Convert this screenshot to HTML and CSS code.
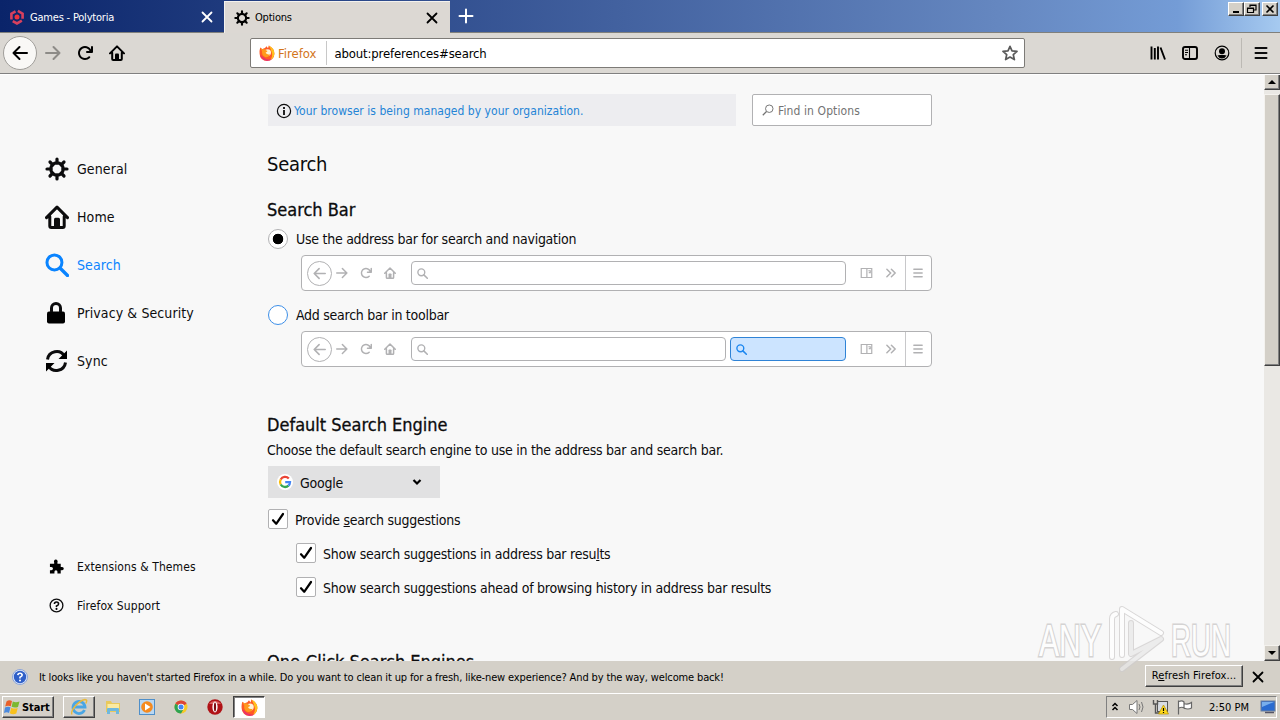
FILE: index.html
```html
<!DOCTYPE html>
<html lang="en">
<head>
    <meta charset="UTF-8">
    <title>Options</title>
    <link rel="stylesheet" href="styles.css">
</head>
<body>
    <svg class="defs">
        <symbol id="gear" viewBox="0 0 24 24">
            <circle cx="12" cy="12" r="6.2" fill="none" stroke="currentColor" stroke-width="3.2"/>
            <path d="M12 2v4M12 18v4M2 12h4M18 12h4M5 5l2.800 2.800M16.200 16.200l2.800 2.800M5 19l2.800-2.800M16.200 7.800l2.800-2.800" fill="none" stroke="currentColor" stroke-width="3.2" stroke-linecap="round"/>
        </symbol>
        <symbol id="home" viewBox="0 0 16 16">
            <path d="M1 8.400L8 1.400l7 7M3.200 7.700V14q0 1 1 1h7.600q1 0 1-1V7.700" fill="none" stroke="currentColor" stroke-width="2" stroke-linecap="round" stroke-linejoin="round"/>
            <path d="M6 14.500V9.500q0-1 1-1h2q1 0 1 1v5z" fill="currentColor"/>
        </symbol>
        <symbol id="search" viewBox="0 0 16 16">
            <path d="M10 10l5 5" fill="none" stroke="currentColor" stroke-width="2.200" stroke-linecap="round"/>
            <circle cx="6.300" cy="6.300" r="5" fill="none" stroke="currentColor" stroke-width="2"/>
        </symbol>
        <symbol id="back" viewBox="0 0 16 16">
            <path d="M15 8H1.500M7.500 2L1.500 8l6 6" fill="none" stroke="currentColor" stroke-width="2" stroke-linecap="round" stroke-linejoin="round"/>
        </symbol>
        <symbol id="forward" viewBox="0 0 16 16">
            <path d="M1 8h13.500M8.500 2l6 6-6 6" fill="none" stroke="currentColor" stroke-width="2" stroke-linecap="round" stroke-linejoin="round"/>
        </symbol>
        <symbol id="reload" viewBox="0 0 16 16">
            <path d="M15 1a1 1 0 0 0-1 1v2.418A6.995 6.995 0 1 0 8 15a6.954 6.954 0 0 0 4.950-2.050 1 1 0 0 0-1.414-1.414A5.019 5.019 0 1 1 12.549 6H10a1 1 0 0 0 0 2h5a1 1 0 0 0 1-1V2a1 1 0 0 0-1-1z" fill="currentColor"/>
        </symbol>
        <symbol id="close" viewBox="0 0 12 12">
            <path d="M1.500 1.500l9 9M10.500 1.500l-9 9" fill="none" stroke="currentColor" stroke-width="1.800" stroke-linecap="round"/>
        </symbol>
        <symbol id="menu" viewBox="0 0 16 16">
            <path d="M2.500 3h11M2.500 8h11M2.500 13h11" fill="none" stroke="currentColor" stroke-width="2" stroke-linecap="round"/>
        </symbol>
        <symbol id="panel" viewBox="0 0 16 16">
            <path d="M1 2h14v12H1zM8.500 2v12M10.500 5h2.500v2.500h-2" fill="none" stroke="currentColor" stroke-width="1.600"/>
        </symbol>
        <symbol id="more" viewBox="0 0 16 16">
            <path d="M2.500 3l5 5-5 5M8.500 3l5 5-5 5" fill="none" stroke="currentColor" stroke-width="2" stroke-linecap="round"/>
        </symbol>
        <symbol id="check" viewBox="0 0 18 18">
            <path d="M4 10.200l3.200 3.600L14 4" fill="none" stroke="currentColor" stroke-width="2.200" stroke-linecap="round" stroke-linejoin="round"/>
        </symbol>
        <symbol id="firefox" viewBox="0 0 16 16">
            <path d="M1.200 2.500L3.300 4.200Q4.500 3.300 6 3L7.500 1.200 9 3.200 9.800.5Q15.600 3.500 15.400 8.800A7.400 7.200 0 0 1 .6 8.800Q.3 5.500 1.200 2.500z" fill="#ff5a26"/>
            <path d="M9.800.5Q15.600 3.500 15.400 8.800q-.3 4-4 6.200Q14 11 12.800 7.500 12 4 9.800.5z" fill="#ffc21c"/>
            <path d="M1 9q1 6 7 7 3.500 0 5-2-5 1.500-8.500-1.500T1 9z" fill="#e0218a" opacity=".7"/>
            <circle cx="8.600" cy="7.600" r="3.400" class="globe"/>
            <path d="M1.200 2.500L3.300 4.200Q5.500 3.500 7 5.200L8.500 6Q8 7.400 6.600 7.600q.6 2.400 4.400 1.600-1 3.300-4.500 3Q2.500 11 3 6z" fill="#ff9a1c"/>
        </symbol>
    </svg>

    <div class="titlebar">
        <div class="tab">
            <svg class="tab-icon" viewBox="0 0 16 16"><path d="M8 1.500l5.600 3.200v6.600L8 14.500l-5.600-3.200V4.700z" fill="none" stroke="#d8405e" stroke-width="2.600" stroke-dasharray="10.500 2.400" stroke-dashoffset="-1"/><circle cx="8" cy="8" r="2.500" fill="#f0323c"/></svg>
            <span class="tab-title">Games - Polytoria</span>
            <svg class="tab-close"><use href="#close"/></svg>
        </div>
        <div class="tab active">
            <svg class="tab-icon"><use href="#gear"/></svg>
            <span class="tab-title">Options</span>
            <svg class="tab-close"><use href="#close"/></svg>
        </div>
        <svg class="new-tab" viewBox="0 0 16 16"><path d="M8 1.500v13M1.500 8h13" stroke="#fff" stroke-width="2" stroke-linecap="round"/></svg>
        <div class="window-buttons">
            <div class="win-btn"><svg viewBox="0 0 12 10"><path d="M3 8h6" stroke="#000" stroke-width="2"/></svg></div>
            <div class="win-btn"><svg viewBox="0 0 12 10"><path d="M4 3V1h6v5H8M4 1.500h6M1.500 4h6v4.500h-6zM1.500 4.500h6" fill="none" stroke="#000" stroke-width="1.200"/></svg></div>
            <div class="win-btn last"><svg viewBox="0 0 12 10"><path d="M2.500 1.500l7 7M9.500 1.500l-7 7" stroke="#000" stroke-width="1.600"/></svg></div>
        </div>
    </div>

    <div class="navbar">
        <div class="nav-left">
            <span class="back-btn"><svg><use href="#back"/></svg></span>
            <svg class="dim"><use href="#forward"/></svg>
            <svg><use href="#reload"/></svg>
            <svg><use href="#home"/></svg>
        </div>
        <div class="urlbar">
            <svg class="ff"><use href="#firefox"/></svg>
            <span class="identity">Firefox</span>
            <span class="url">about:preferences#search</span>
            <svg class="star" viewBox="0 0 16 16"><path d="M8 1.300l2 4.600 5 .5-3.700 3.300 1.100 4.900L8 12l-4.400 2.600 1.100-4.900L1 6.400l5-.5z" fill="none" stroke="#5a5a5a" stroke-width="1.700" stroke-linejoin="round"/></svg>
        </div>
        <div class="nav-right">
            <svg viewBox="0 0 16 16"><path d="M1.500 1.500v13M4.800 3v11.500M8 1.500v13M10.500 2.500l4.500 12" fill="none" stroke="#000" stroke-width="1.900"/></svg>
            <svg viewBox="0 0 16 16"><rect x="1" y="2" width="14" height="12" rx="2" fill="none" stroke="#000" stroke-width="1.900"/><path d="M7.500 2v12M3 5.200h3M3 7.500h3M3 9.800h2" stroke="#000" stroke-width="1.100"/></svg>
            <svg viewBox="0 0 16 16"><circle cx="8" cy="8" r="6.800" fill="none" stroke="#000" stroke-width="1.200"/><circle cx="8" cy="6.300" r="3" /><path d="M3.400 10.500q2-.8 3-.5h3.200q1-.3 3 .5Q11 13.500 8 13.500t-4.600-3z"/></svg>
            <span class="nav-sep"></span>
            <svg><use href="#menu"/></svg>
        </div>
    </div>

    <div class="page">
        <div class="sidebar">
            <div class="category"><svg><use href="#gear"/></svg>General</div>
            <div class="category"><svg><use href="#home"/></svg>Home</div>
            <div class="category selected"><svg><use href="#search"/></svg>Search</div>
            <div class="category"><svg viewBox="0 0 24 24"><rect x="2" y="10.500" width="18" height="12" rx="2"/><path d="M6.500 11V7a4.500 4.500 0 0 1 9 0v4" fill="none" stroke="#0c0c0d" stroke-width="3"/></svg>Privacy &amp; Security</div>
            <div class="category"><svg viewBox="0 0 24 24"><path d="M2.500 10.500A9.200 9.200 0 0 1 19.500 7M20.500 13.500A9.200 9.200 0 0 1 3.500 17" fill="none" stroke="#0c0c0d" stroke-width="3"/><path d="M22 1.500V10H13.500zM1 22.500V14h8.500z"/></svg>Sync</div>
            <div class="side-links">
                <div class="side-link"><svg viewBox="0 0 16 16"><path d="M1 5h4.500V3.500a2 2 0 1 1 3.500 0V5h3.500v3.500H14a1.700 1.700 0 1 1 0 3.500h-1.500v3.500H9v-1.800a1.600 1.600 0 0 0-3.200 0v1.800H1V12h1.500a1.600 1.600 0 0 0 0-3.500H1z"/></svg>Extensions &amp; Themes</div>
                <div class="side-link"><svg viewBox="0 0 16 16"><circle cx="8" cy="8" r="6.800" fill="none" stroke="#0c0c0d" stroke-width="1.400"/><path d="M5.800 6.500Q5.800 4.300 8 4.300t2.200 2Q10.200 7.500 8 8.500v1" fill="none" stroke="#0c0c0d" stroke-width="1.700"/><circle cx="8" cy="11.600" r="1.100"/></svg>Firefox Support</div>
            </div>
        </div>

        <div class="main">
            <div class="top-row">
                <div class="managed">
                    <svg viewBox="0 0 16 16"><circle cx="8" cy="8" r="6.600" fill="none" stroke="#0c0c0d" stroke-width="1.200"/><path d="M8 7v5M8 4v1.900" stroke="#0c0c0d" stroke-width="1.800"/></svg>
                    Your browser is being managed by your organization.
                </div>
                <div class="find"><svg class="flip" viewBox="0 0 16 16"><path d="M10 10l5 5" stroke="#737373" stroke-width="1.600"/><circle cx="6.300" cy="6.300" r="5" fill="none" stroke="#737373" stroke-width="1.300"/></svg>Find in Options</div>
            </div>

            <h1>Search</h1>
            <h2>Search Bar</h2>
            <div class="option"><span class="radio checked"></span>Use the address bar for search and navigation</div>
            <div class="mock-bar">
                <span class="mock-back"><svg><use href="#back"/></svg></span>
                <svg><use href="#forward"/></svg>
                <svg><use href="#reload"/></svg>
                <svg><use href="#home"/></svg>
                <div class="mock-field"><svg><use href="#search"/></svg></div>
                <div class="mock-end"><svg><use href="#panel"/></svg><svg><use href="#more"/></svg></div>
                <div class="mock-menu"><svg><use href="#menu"/></svg></div>
            </div>
            <div class="option second"><span class="radio hover"></span>Add search bar in toolbar</div>
            <div class="mock-bar">
                <span class="mock-back"><svg><use href="#back"/></svg></span>
                <svg><use href="#forward"/></svg>
                <svg><use href="#reload"/></svg>
                <svg><use href="#home"/></svg>
                <div class="mock-field"><svg><use href="#search"/></svg></div>
                <div class="mock-field blue"><svg><use href="#search"/></svg></div>
                <div class="mock-end"><svg><use href="#panel"/></svg><svg><use href="#more"/></svg></div>
                <div class="mock-menu"><svg><use href="#menu"/></svg></div>
            </div>

            <h2 class="engine-title">Default Search Engine</h2>
            <p>Choose the default search engine to use in the address bar and search bar.</p>
            <div class="select">
                <svg class="google" viewBox="0 0 16 16">
                    <circle cx="8" cy="8" r="8" fill="#fff"/>
                    <g fill="none" stroke-width="2.300">
                        <path d="M11.800 4.500A5 5 0 0 0 3.700 5.500" stroke="#ea4335"/>
                        <path d="M3.700 5.500a5 5 0 0 0 0 5" stroke="#fbbc05"/>
                        <path d="M3.700 10.500a5 5 0 0 0 7.800 1.100" stroke="#34a853"/>
                        <path d="M11.500 11.600A5 5 0 0 0 13 8.200H8.200" stroke="#4285f4"/>
                    </g>
                </svg>
                <span>Google</span>
                <svg class="arrow" viewBox="0 0 10 8"><path d="M1.500 2L5 5.500 8.500 2" fill="none" stroke="#000" stroke-width="2.200"/></svg>
            </div>
            <div class="option check-row"><span class="checkbox"><svg><use href="#check"/></svg></span><span class="label">Provide <u>s</u>earch suggestions</span></div>
            <div class="option check-row indent"><span class="checkbox"><svg><use href="#check"/></svg></span><span class="label">Show search suggestions in address bar resu<u>l</u>ts</span></div>
            <div class="option check-row indent"><span class="checkbox"><svg><use href="#check"/></svg></span><span class="label">Show search suggestions ahead of browsing history in address bar results</span></div>
            <h2 class="one-click">One-Click Search Engines</h2>
        </div>

        <div class="scrollbar">
            <div class="scroll-btn"><svg viewBox="0 0 8 4"><path d="M0 4l4-4 4 4z"/></svg></div>
            <div class="thumb"></div>
            <div class="scroll-btn bottom"><svg viewBox="0 0 8 4"><path d="M0 0h8L4 4z"/></svg></div>
        </div>
    </div>

    <div class="notification">
        <svg class="help" viewBox="0 0 16 16"><circle cx="8" cy="8" r="7.500" fill="#dfe8fa" stroke="#8ba4d8"/><circle cx="8" cy="8" r="6.200" fill="#2f5fc8"/><path d="M5.800 6.200Q6 4.200 8 4.200t2.200 1.900Q10.200 7.300 8 8.300v1.200" fill="none" stroke="#fff" stroke-width="1.600"/><circle cx="8" cy="11.600" r="1" fill="#fff"/></svg>
        <span class="message">It looks like you haven't started Firefox in a while. Do you want to clean it up for a fresh, like-new experience? And by the way, welcome back!</span>
        <div class="refresh">R<u>e</u>fresh Firefox...</div>
        <svg class="dismiss"><use href="#close"/></svg>
    </div>

    <div class="taskbar">
        <div class="start">
            <svg viewBox="0 0 16 16"><path d="M2.500 2.500Q5 .5 8 2L6.800 7.300Q4 6 1.200 7.500z" fill="#e8602a"/><path d="M8.800 2.400Q11.500 4 15.500 2.500L14 8Q10.500 9.200 7.600 7.700z" fill="#7cb82f"/><path d="M1 8.500q3-1.500 5.500-.2L5 14Q3 12.500 0 14z" fill="#4b8ade"/><path d="M7.300 8.700q3 1.600 6.400.3L12.300 14.500q-3.300 1.500-6.500-.2z" fill="#f8c11c"/></svg>
            Start
        </div>
        <div class="task raised"><svg viewBox="0 0 18 18"><path d="M14.500 12A6 6 0 1 1 15 9H5" fill="none" stroke="#4aa6e4" stroke-width="2.800"/><path d="M2 16.500C0 13 8 3 15 1.500q3 0 .8 4" fill="none" stroke="#e9b93a" stroke-width="1.400"/></svg></div>
        <div class="task"><svg viewBox="0 0 18 18"><path d="M2 3h5l1 2h8v9H2z" fill="#e9c95c"/><path d="M3.500 6H15v7H3.500z" fill="#fbeaa0"/><path d="M3 16v-5q0-1 1-1h10q1 0 1 1v5h-3v-3H6v3z" fill="#6fb8dd"/></svg></div>
        <div class="task"><svg viewBox="0 0 18 18"><rect x="1.500" y="1.500" width="15" height="15" fill="#b9d7f2" stroke="#4f8fc9"/><circle cx="9" cy="9" r="5.800" fill="#f58a1f"/><path d="M7 5.500l5.500 3.500L7 12.500z" fill="#fff"/></svg></div>
        <div class="task"><svg viewBox="0 0 18 18"><circle cx="9" cy="9" r="6.500" fill="#f6c928"/><path d="M9 9L3.400 5.700a6.500 6.500 0 0 1 11.200 0z" fill="#dc4437"/><path d="M9 9L3.400 5.700A6.500 6.500 0 0 0 9 15.500l2-3.500z" fill="#2ea352"/><circle cx="9" cy="9" r="3.300" fill="#fff"/><circle cx="9" cy="9" r="2.500" fill="#4285f4"/></svg></div>
        <div class="task"><svg viewBox="0 0 18 18"><circle cx="9" cy="9" r="7.700" fill="#b01216"/><path d="M3 6a7 6 0 0 1 12 0z" fill="#d9605e"/><ellipse cx="9" cy="9" rx="2.600" ry="5.400" fill="#fff"/><ellipse cx="9" cy="9" rx="1.100" ry="4.600" fill="#7d0c10"/></svg></div>
        <div class="task pressed"><svg><use href="#firefox"/></svg></div>
        <div class="tray">
            <svg class="expand" viewBox="0 0 8 12"><path d="M1.500 5L4 2.500 6.500 5M1.500 9L4 6.500 6.500 9" fill="none" stroke="#000" stroke-width="1.500"/></svg>
            <svg class="speaker" viewBox="0 0 18 16"><path d="M1.500 5.500h3L9 1.500v13L4.500 10.500h-3z" fill="#fff" stroke="#777"/><path d="M11 5q2 3 0 6M13.500 3q3 5 0 10" fill="none" stroke="#777"/></svg>
            <svg class="network" viewBox="0 0 18 16"><rect x="5.500" y="2.500" width="10" height="10" fill="#d8dce2" stroke="#555"/><path d="M1.500 1v4h4V1M3.500 5v9h4" fill="none" stroke="#555" stroke-width="1.400"/><path d="M11.500 6l5 9h-10z" fill="#ffd91a" stroke="#b58f00" stroke-width=".7"/><path d="M11.500 9v3M11.500 13v1" stroke="#000" stroke-width="1.200"/></svg>
            <svg class="flag" viewBox="0 0 18 16"><path d="M2.500 1.500v14M3 2.500q3-1.500 5 .5v6q-2-1.500-5 0M8 4.500q4 1.500 7.500-1v5.500q-3.500 2-7.500 0" fill="#fff" stroke="#666" stroke-width="1.200"/></svg>
            <span class="clock">2:50 PM</span>
            <svg class="desktop" viewBox="0 0 16 16"><rect x="1" y="2" width="14" height="10" fill="#2a6bd0" stroke="#6b7f9c"/><path d="M2 3h12L2 8z" fill="#78aeec"/><path d="M5 13.500h9" stroke="#556" stroke-width="1.500"/></svg>
        </div>
    </div>

    <svg class="watermark" viewBox="0 0 210 74">
        <g class="mark-text">
            <text x="5" y="53" textLength="62" lengthAdjust="spacingAndGlyphs">ANY</text>
            <text x="137" y="53" textLength="60" lengthAdjust="spacingAndGlyphs">RUN</text>
        </g>
        <g fill="none" stroke-linejoin="round" stroke-linecap="round">
            <path d="M78 54V16q0-4 4-5M88 52V6l39 24M88 66l39-30-30 15V20" stroke="#cfcdcd" stroke-width="6"/>
            <path d="M78 54V16q0-4 4-5M88 52V6l39 24" stroke="#fff" stroke-width="4"/>
            <path d="M88 66l39-30-30 15V20" stroke="#e9e8e8" stroke-width="4"/>
        </g>
    </svg>
</body>
</html>
```
FILE: styles.css
```css
* {
    box-sizing: border-box;
}
body {
    margin: 0;
    width: 1280px;
    height: 720px;
    overflow: hidden;
    position: relative;
    display: flex;
    flex-direction: column;
    font-family: "DejaVu Sans Condensed", "DejaVu Sans", sans-serif;
    font-stretch: condensed;
    font-size: 11px;
    color: #0c0c0d;
    background: #d4d0c8;
}
svg {
    display: block;
    flex-shrink: 0;
    width: 16px;
    height: 16px;
}
.defs {
    position: absolute;
    width: 0;
    height: 0;
}
.globe { fill: #fff3d8; }
.pressed .globe { fill: #2b50b8; }

/* title bar */
.titlebar {
    display: flex;
    height: 33px;
    flex-shrink: 0;
    background: linear-gradient(to right, #0a246a, #6587c0 78%, #749cd6 92%, #a6caf0);
    border-bottom: 1px solid #80807c;
}
.tab {
    display: flex;
    align-items: center;
    width: 224px;
    color: #fff;
    padding: 2px 11px 0 9px;
    letter-spacing: -0.2px;
}
.tab.active {
    width: 226px;
    height: 32px;
    margin: 1px 0 -1px;
    padding: 1px 12px 1px 9px;
    background: #dcd8d3;
    border-top: 1px solid #f4f2ee;
    border-left: 1px solid #f4f2ee;
    color: #000;
}
.tab-icon { margin-right: 5px; }
.tab-title { flex: 1; }
.tab-close { width: 12px; height: 12px; }
.new-tab { margin: 8px 0 0 8px; }
.window-buttons {
    display: flex;
    margin: 2px 2px 0 auto;
}
.win-btn {
    width: 16px;
    height: 14px;
    padding: 1px;
    background: #d4d0c8;
    border: 1px solid;
    border-color: #fff #404040 #404040 #fff;
    box-shadow: inset -1px -1px #808080;
}
.win-btn svg { width: 12px; height: 10px; }
.win-btn.last { margin-left: 2px; }

/* navigation bar */
.navbar {
    display: flex;
    align-items: center;
    height: 41px;
    flex-shrink: 0;
    background: #dbd8d3;
    border-bottom: 1px solid #808080;
}
.nav-left {
    display: flex;
    align-items: center;
    gap: 16px;
    width: 250px;
    padding-left: 3px;
    color: #000;
}
.back-btn {
    display: flex;
    align-items: center;
    justify-content: center;
    width: 34px;
    height: 34px;
    margin-right: -8px;
    border: 1px solid #a09e9a;
    border-radius: 50%;
    background: #f9f8f6;
}
.dim { color: #8d8b87; }
.urlbar {
    display: flex;
    align-items: center;
    width: 775px;
    height: 30px;
    padding: 0 6px 0 8px;
    background: #fff;
    border: 1px solid #7d7b77;
    border-radius: 2px;
    font-size: 13px;
}
.identity {
    color: #d3741a;
    padding: 5px 9px 4px 3px;
    border-right: 1px solid #c8c8c8;
}
.url {
    flex: 1;
    padding: 1px 0 0 8px;
    letter-spacing: -0.15px;
    color: #000;
}
.nav-right {
    display: flex;
    align-items: center;
    gap: 16px;
    margin-left: 125px;
}
.nav-sep {
    width: 1px;
    height: 30px;
    margin: 0 -5px;
    background: #bcb9b4;
}

/* preferences page */
.page {
    display: flex;
    height: 587px;
    flex-shrink: 0;
    overflow: hidden;
    background: #f8f8f8;
    border-top: 1px solid #fff;
}
.sidebar {
    display: flex;
    flex-direction: column;
    width: 267px;
    padding: 70px 0 36px 45px;
    font-size: 14px;
}
.category {
    display: flex;
    align-items: center;
    gap: 8px;
    height: 48px;
    letter-spacing: 0.1px;
}
.category svg { width: 24px; height: 24px; }
.category.selected { color: #0a84ff; }
.side-links {
    margin-top: auto;
    font-size: 12px;
}
.side-link {
    display: flex;
    align-items: center;
    gap: 13px;
    height: 39px;
    padding-left: 4px;
    letter-spacing: 0.1px;
}
.side-link svg { width: 15px; height: 15px; }

.main {
    width: 665px;
    padding-top: 19px;
    font-size: 14px;
}
.top-row {
    display: flex;
    gap: 16px;
    padding-left: 1px;
    font-size: 12px;
}
.managed {
    display: flex;
    align-items: center;
    gap: 2px;
    width: 468px;
    height: 32px;
    padding: 1px 0 0 8px;
    background: #ededf0;
    color: #2484d6;
    letter-spacing: 0.03px;
}
.find {
    display: flex;
    align-items: center;
    gap: 4px;
    width: 180px;
    height: 32px;
    padding: 1px 0 0 9px;
    background: #fff;
    border: 1px solid #b1b1b3;
    border-radius: 2px;
    color: #737373;
    letter-spacing: 0.1px;
}
.flip {
    width: 12px;
    height: 12px;
    margin-top: -2px;
    transform: scaleX(-1);
}
h1, h2, p {
    margin: 0;
    font-weight: normal;
    white-space: nowrap;
}
h1 {
    margin-top: 23px;
    font-size: 20px;
    line-height: 30px;
    letter-spacing: -0.25px;
}
h2 {
    font-size: 18px;
    line-height: 24px;
    -webkit-text-stroke: 0.3px #0c0c0d;
}
h1 + h2 { margin-top: 19px; }
.option {
    display: flex;
    align-items: center;
    gap: 8px;
    height: 20px;
    margin-top: 7px;
    padding-left: 1px;
    white-space: nowrap;
    letter-spacing: -0.26px;
}
.option.second { margin-top: 14px; }
.radio {
    width: 20px;
    height: 20px;
    border: 1px solid #b1b1b3;
    border-radius: 50%;
    background: #fff;
}
.radio.checked {
    background: radial-gradient(circle, #000 5px, #fff 5.6px);
}
.radio.hover { border-color: #3d8fe8; }

.mock-bar {
    display: flex;
    align-items: center;
    height: 36px;
    margin: 6px 0 0 34px;
    padding-left: 5px;
    background: #fff;
    border: 1px solid #b1b1b3;
    border-radius: 4px;
    color: #b1b1b3;
}
.mock-bar svg {
    width: 12px;
    height: 12px;
    margin-right: 12px;
}
.mock-back {
    display: flex;
    align-items: center;
    justify-content: center;
    width: 25px;
    height: 25px;
    margin-right: 4px;
    border: 1px solid #b1b1b3;
    border-radius: 50%;
}
.mock-bar .mock-back svg { width: 13px; height: 13px; margin: 0; }
.mock-field {
    display: flex;
    align-items: center;
    flex: 1;
    height: 24px;
    margin-left: 3px;
    padding-left: 5px;
    border: 1px solid #b1b1b3;
    border-radius: 4px;
}
.mock-field svg { width: 11px; height: 11px; }
.mock-field.blue {
    flex: 0 0 116px;
    margin-left: 4px;
    color: #1a86f0;
    background: #cce4ff;
    border-color: #2f83d6;
}
.mock-end {
    display: flex;
    margin-left: 14px;
}
.mock-end svg:first-child { width: 13px; }
.mock-end svg:last-child { margin-right: 8px; }
.mock-menu {
    display: flex;
    align-items: center;
    height: 34px;
    width: 26px;
    padding-left: 6px;
    border-left: 1px solid #c8c8ca;
}

.engine-title { margin-top: 46px; }
p {
    margin-top: 4px;
    line-height: 18px;
    letter-spacing: -0.25px;
}
.select {
    display: flex;
    align-items: center;
    width: 172px;
    height: 32px;
    margin: 7px 0 0 1px;
    padding: 0 18px 0 9px;
    background: #e1e1e2;
    letter-spacing: -0.25px;
}
.select span, .label { padding-top: 2px; }
.google { margin-right: 7px; }
.arrow {
    width: 10px;
    height: 8px;
    margin-left: auto;
}
.option.check-row {
    gap: 7px;
    margin-top: 11px;
}
.option.indent {
    margin-top: 14px;
    padding-left: 29px;
}
.checkbox {
    width: 20px;
    height: 20px;
    background: #fff;
    border: 1px solid #b1b1b3;
    border-radius: 2px;
    color: #000;
}
.checkbox svg { width: 18px; height: 18px; }
.one-click { margin-top: 53px; }

.scrollbar {
    display: flex;
    flex-direction: column;
    width: 16px;
    margin: -1px 0 0 auto;
    background: #eae8e4;
}
.scroll-btn, .thumb {
    background: #d4d0c8;
    border: 1px solid;
    border-color: #f4f2ee #404040 #404040 #f4f2ee;
    box-shadow: inset -1px -1px #808080;
}
.scroll-btn {
    display: flex;
    align-items: center;
    justify-content: center;
    height: 16px;
}
.scroll-btn svg { width: 8px; height: 4px; }
.thumb {
    height: 272px;
    margin-top: 4px;
}
.scroll-btn.bottom { margin-top: auto; }

/* notification bar */
.notification {
    display: flex;
    align-items: center;
    height: 32px;
    flex-shrink: 0;
    padding: 0 16px 0 12px;
    color: #000;
}
.message {
    flex: 1;
    padding-left: 11px;
    white-space: nowrap;
    letter-spacing: -0.14px;
}
.refresh {
    width: 98px;
    height: 22px;
    margin: -2px 9px 0 0;
    line-height: 20px;
    text-align: center;
    letter-spacing: 0.12px;
    border: 1px solid;
    border-color: #fff #404040 #404040 #fff;
    box-shadow: inset -1px -1px #808080;
}
.dismiss { width: 12px; height: 12px; }

/* taskbar */
.taskbar {
    display: flex;
    align-items: flex-start;
    height: 27px;
    flex-shrink: 0;
    padding: 2px 3px 0 2px;
    border-top: 1px solid #fff;
    color: #000;
}
.start {
    display: flex;
    align-items: center;
    gap: 2px;
    width: 52px;
    height: 22px;
    margin-right: 9px;
    padding-left: 1px;
    font-weight: bold;
    letter-spacing: -0.1px;
    border: 1px solid;
    border-color: #fff #404040 #404040 #fff;
    box-shadow: inset -1px -1px #808080;
}
.task {
    display: flex;
    align-items: center;
    justify-content: center;
    width: 32px;
    height: 22px;
    margin-right: 2px;
    border: 1px solid transparent;
}
.task svg { width: 18px; height: 18px; }
.task.raised {
    border-color: #fff #404040 #404040 #fff;
    box-shadow: inset -1px -1px #808080;
}
.task.pressed {
    background: #fff;
    border-color: #404040 #fff #fff #404040;
    box-shadow: inset 1px 1px #808080;
}
.task.pressed svg { width: 17px; height: 17px; }
.tray {
    display: flex;
    align-items: center;
    width: 171px;
    height: 22px;
    margin-left: auto;
    padding-left: 4px;
    border: 1px solid;
    border-color: #808080 #fff #fff #808080;
}
.expand { width: 8px; height: 12px; }
.speaker { width: 18px; margin-left: 9px; }
.network { width: 18px; margin-left: 6px; }
.flag { width: 18px; margin-left: 6px; }
.clock {
    margin: 0 auto;
    padding-left: 4px;
    white-space: nowrap;
}
.desktop { margin-right: 0; }

.watermark {
    position: absolute;
    left: 1034px;
    top: 603px;
    width: 210px;
    height: 74px;
    opacity: 0.75;
}
.mark-text {
    font-family: "Liberation Sans Narrow", "Liberation Sans", sans-serif;
    font-size: 44px;
    fill: #fff;
    stroke: #c9c7c7;
    stroke-width: 3px;
    paint-order: stroke;
}
```
